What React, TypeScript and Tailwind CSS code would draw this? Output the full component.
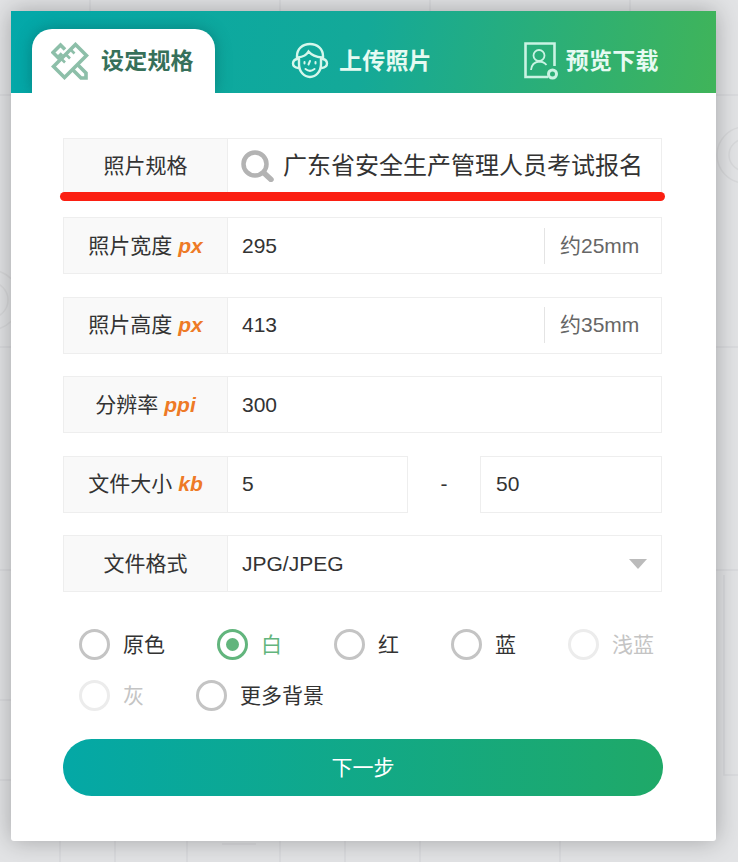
const cjk = 'font-["Liberation_Sans","Noto_Sans_CJK_SC",sans-serif]'

function Backdrop() {
  // faint line pattern behind the card
  return (
    <svg className="absolute inset-0" width="738" height="862" fill="none" stroke="#d8d9db" strokeWidth="1.5">
      <path d="M0 95h11M716 95h22M716 347h22M0 347h11M716 570h22M0 570h11M724 575v200h14M0 700h11M0 780h11" />
      <circle cx="-10" cy="300" r="30" />
      <circle cx="-10" cy="300" r="18" />
      <circle cx="745" cy="155" r="28" />
      <circle cx="745" cy="155" r="16" />
      <path d="M60 841v21M115 841v21M187 841v21M280 841v21M345 841v21M420 841v21M560 841v21M222 844h34M90 0v11M280 0v11M430 0v11M630 0v11" />
    </svg>
  )
}

function RulerIcon() {
  return (
    <svg width="38" height="38" viewBox="0 0 38 38" fill="none" stroke="#8dbfa9" strokeWidth="3.6">
      <path d="M24.500 2.500 35.500 13.500 13.500 35.500 2.500 24.500Z" />
      <path d="M10.500 17l3.500 3.500M15 12.500l4 4M20 8l3.500 3.500" strokeWidth="2.600" />
      <path d="M11 11.500 7 15.500 2 10.500 9.500 3l4.500 4.500" />
      <path d="M26.500 22.500 35 31v5h-5l-8-8" />
    </svg>
  )
}

function FaceIcon() {
  return (
    <svg width="38" height="38" viewBox="0 0 38 38" fill="none" stroke="#d6f7ec" strokeWidth="2.400" strokeLinecap="round">
      <path d="M6 17V14C6 7 11.500 2 19 2s13 5 13 12v3" />
      <path d="M7 15.500c4.500-.5 8.500-2.500 10.500-6 3 3.500 8 5.500 13.500 6" />
      <path d="M8 17v5c0 7.500 5 13 11 13s11-5.500 11-13v-5" />
      <path d="M6 17c-2.500.7-4 2.500-4 4.500S3.500 25.500 7.500 26M32 17c2.500.7 4 2.500 4 4.500s-1.500 4-5.500 4.500" />
      <path d="M13.500 20v1.500M24.500 20v1.500M14.500 27c3 2.500 6 2.500 9 0M19 19l-1.500 3.500" strokeWidth="2" />
    </svg>
  )
}

function PortraitIcon() {
  return (
    <svg width="34" height="38" viewBox="0 0 34 38" fill="none" stroke="#c9f3e3" strokeWidth="2.600">
      <path d="M24 35H1.500V1.500h29V24" />
      <circle cx="15" cy="13.500" r="5.500" strokeWidth="1.800" />
      <path d="M7 28c.5-5 3.500-8 8-8.500 3 0 5.500 1 7.500 3.500" strokeWidth="1.800" />
      <circle cx="28.500" cy="32" r="4" strokeWidth="3" />
    </svg>
  )
}

function Tab({ icon, label, active, gap }: { icon: React.ReactNode; label: string; active?: boolean; gap: string }) {
  return (
    <div
      className={
        active
          ? 'flex h-[64px] w-[183px] items-center rounded-t-[20px] bg-white pl-[19px] shadow-[0_0_16px_rgba(0,60,60,0.35)]'
          : 'flex h-[64px] items-center'
      }
    >
      {icon}
      <span className={`${gap} text-[23px] font-bold tracking-[0.2px] ${active ? 'text-[#37705a]' : 'text-[#e6faf2]'}`}>
        {label}
      </span>
    </div>
  )
}

function Label({ text, unit }: { text: string; unit?: string }) {
  return (
    <div className="flex h-full w-[164px] shrink-0 items-center justify-center border-r border-[#eeeeee] bg-[#f9f9f9] text-[21px] text-[#333333]">
      {text}
      {unit && <em className="ml-[6px] text-[21px] font-bold text-[#ee7a26]">{unit}</em>}
    </div>
  )
}

function Row({ children }: { children: React.ReactNode }) {
  return <div className="flex h-[57px] w-[599px] items-center border border-[#eeeeee] text-[21px] text-[#333333]">{children}</div>
}

function SizeRow({ label, value, mm }: { label: string; value: string; mm: string }) {
  return (
    <Row>
      <Label text={label} unit="px" />
      <span className="flex-1 pl-[14px]">{value}</span>
      <span className="flex h-[36px] w-[117px] items-center border-l border-[#e4e4e4] pl-[15px] text-[#666666]">{mm}</span>
    </Row>
  )
}

function Radio({ label, state }: { label: string; state?: 'on' | 'off' }) {
  const ring = state === 'on' ? 'border-[#62b57d]' : state === 'off' ? 'border-[#ececec]' : 'border-[#c4c4c4]'
  const text = state === 'on' ? 'text-[#62b57d]' : state === 'off' ? 'text-[#c4c4c4]' : 'text-[#333333]'
  return (
    <div className="flex h-[31px] items-center">
      <span className={`flex h-[31px] w-[31px] items-center justify-center rounded-full border-[3px] ${ring}`}>
        {state === 'on' && <span className="h-[13px] w-[13px] rounded-full bg-[#62b57d]" />}
      </span>
      <span className={`ml-[13px] text-[21px] ${text}`}>{label}</span>
    </div>
  )
}

export default function App() {
  return (
    <div className={`relative h-[862px] w-[738px] overflow-hidden bg-[#e2e3e5] pl-[11px] pt-[11px] ${cjk}`}>
      <Backdrop />
      <div className="relative h-[830px] w-[705px] rounded-b-[3px] bg-white shadow-[0_0_24px_rgba(0,0,0,0.28)]">
        <div className="flex h-[82px] items-end overflow-hidden bg-[linear-gradient(100deg,#03a8a9_0%,#14a998_50%,#40b459_100%)] pl-[21px]">
          <Tab active gap="ml-[12px]" icon={<RulerIcon />} label="设定规格" />
          <div className="ml-[76px]">
            <Tab gap="ml-[10px]" icon={<FaceIcon />} label="上传照片" />
          </div>
          <div className="ml-[92px]">
            <Tab gap="ml-[8px]" icon={<PortraitIcon />} label="预览下载" />
          </div>
        </div>

        <div className="flex flex-col gap-[22.500px] pl-[52px] pt-[44.600px]">
          <Row>
            <Label text="照片规格" />
            <svg className="ml-[13px] shrink-0" width="33" height="32" viewBox="0 0 33 32" fill="none" stroke="#b3b3b3">
              <circle cx="14" cy="14" r="11.500" strokeWidth="4.500" />
              <path d="M23 23l7 6.500" strokeWidth="5.500" strokeLinecap="round" />
            </svg>
            <span className="ml-[9px] whitespace-nowrap text-[24px] text-[#333333]">广东省安全生产管理人员考试报名</span>
          </Row>
          <SizeRow label="照片宽度" value="295" mm="约25mm" />
          <SizeRow label="照片高度" value="413" mm="约35mm" />
          <Row>
            <Label text="分辨率" unit="ppi" />
            <span className="pl-[14px]">300</span>
          </Row>
          <div className="flex h-[57px] w-[599px] items-center text-[21px] text-[#333333]">
            <div className="flex h-full w-[345px] items-center border border-[#eeeeee]">
              <Label text="文件大小" unit="kb" />
              <span className="pl-[14px]">5</span>
            </div>
            <span className="w-[72px] text-center">-</span>
            <div className="flex h-full flex-1 items-center border border-[#eeeeee] pl-[15px]">50</div>
          </div>
          <Row>
            <Label text="文件格式" />
            <span className="flex-1 pl-[14px]">JPG/JPEG</span>
            <span className="mr-[14px] h-0 w-0 border-x-[9px] border-t-[10px] border-x-transparent border-t-[#bbbbbb]" />
          </Row>
        </div>

        <div className="ml-[68px] mt-[37.400px] flex w-[590px] flex-wrap gap-x-[52px] gap-y-[20px]">
          <Radio label="原色" />
          <Radio label="白" state="on" />
          <Radio label="红" />
          <Radio label="蓝" />
          <Radio label="浅蓝" state="off" />
          <Radio label="灰" state="off" />
          <Radio label="更多背景" />
        </div>

        <div className="ml-[52px] mt-[28px] flex h-[57px] w-[600px] items-center justify-center rounded-full bg-[linear-gradient(90deg,#04a8a6,#1fa968)] text-[21px] text-white">
          下一步
        </div>

        {/* red marker drawn over the first row */}
        <div className="absolute left-[49px] top-[181px] h-[9px] w-[605px] rounded-full bg-[#fb1f12]" />
      </div>
    </div>
  )
}
